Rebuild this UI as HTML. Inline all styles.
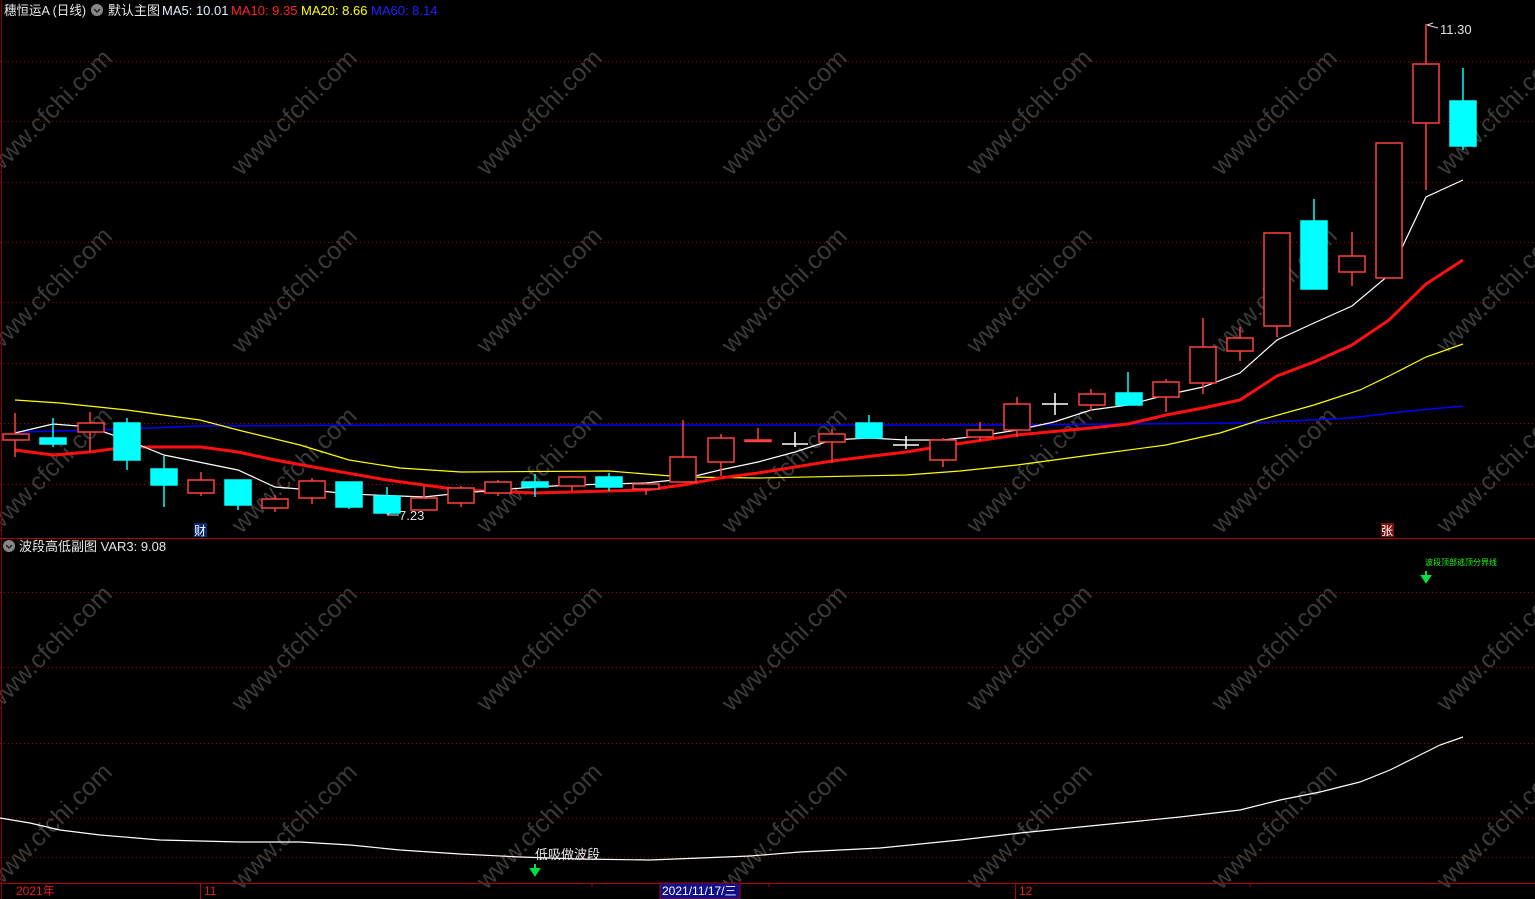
<!DOCTYPE html>
<html><head><meta charset="utf-8"><style>
html,body{margin:0;padding:0;background:#000;width:1535px;height:899px;overflow:hidden}
svg{display:block}
text{font-family:"Liberation Sans","Noto Sans CJK SC",sans-serif}
</style></head><body>
<svg width="1535" height="899" viewBox="0 0 1535 899" xmlns="http://www.w3.org/2000/svg">
<rect width="1535" height="899" fill="#000"/>
<!-- watermark -->
<g fill="#3a3a3a" font-size="25" text-anchor="middle">
<g id="wr">
<text transform="translate(55,118) rotate(-45)">www.cfchi.com</text>
<text transform="translate(300,118) rotate(-45)">www.cfchi.com</text>
<text transform="translate(545,118) rotate(-45)">www.cfchi.com</text>
<text transform="translate(790,118) rotate(-45)">www.cfchi.com</text>
<text transform="translate(1035,118) rotate(-45)">www.cfchi.com</text>
<text transform="translate(1280,118) rotate(-45)">www.cfchi.com</text>
<text transform="translate(1505,118) rotate(-45)">www.cfchi.com</text>
</g>
<use href="#wr" y="178"/><use href="#wr" y="358"/><use href="#wr" y="536"/><use href="#wr" y="714"/>
</g>
<!-- grid -->
<g stroke="#a00000" stroke-width="1" stroke-dasharray="1,3">
<line x1="0" y1="61.5" x2="1535" y2="61.5"/><line x1="0" y1="121.5" x2="1535" y2="121.5"/>
<line x1="0" y1="182.5" x2="1535" y2="182.5"/><line x1="0" y1="242.5" x2="1535" y2="242.5"/>
<line x1="0" y1="302.5" x2="1535" y2="302.5"/><line x1="0" y1="363.5" x2="1535" y2="363.5"/>
<line x1="0" y1="423.5" x2="1535" y2="423.5"/><line x1="0" y1="484.5" x2="1535" y2="484.5"/>
<line x1="0" y1="592.5" x2="1535" y2="592.5"/><line x1="0" y1="667.5" x2="1535" y2="667.5"/>
<line x1="0" y1="743.5" x2="1535" y2="743.5"/><line x1="0" y1="818.5" x2="1535" y2="818.5"/>
<line x1="0" y1="857.5" x2="1535" y2="857.5"/>
</g>
<line x1="0" y1="538.5" x2="1535" y2="538.5" stroke="#b00000"/>
<line x1="0" y1="883.5" x2="1535" y2="883.5" stroke="#b00000"/>
<line x1="1.5" y1="0" x2="1.5" y2="899" stroke="#8a0000"/>
<!-- MA lines -->
<polyline fill="none" stroke="#0000ff" stroke-width="1.5" points="15,432 100,430 200,426 400,425 1000,425 1250,423 1350,418 1400,412 1463,406"/>
<polyline fill="none" stroke="#ffff00" stroke-width="1.2" points="15,400 60,403 127,410 200,420 238,430 300,445 349,460 400,468 461,472 609,471 683,477 758,478 906,475 960,471 1017,465 1091,455 1166,445 1220,433 1260,420 1314,405 1360,390 1389,376 1426,357 1463,344"/>
<polyline fill="none" stroke="#ff1010" stroke-width="3" points="15,450 53,455 90,452 127,447 201,447 238,452 275,460 330,470 387,480 461,490 535,493 646,490 683,485 720,478 758,473 832,461 906,452 943,446 1017,435 1091,428 1128,424 1166,415 1203,408 1240,400 1277,376 1314,362 1352,345 1389,320 1426,284 1463,260"/>
<polyline fill="none" stroke="#ffffff" stroke-width="1.2" points="15,433 53,424 90,427 127,440 164,455 238,470 275,487 312,490 349,494 424,497 461,493 498,490 535,487 572,485 646,483 683,479 720,470 758,462 795,452 832,440 869,438 906,440 943,440 980,436 1017,430 1054,422 1091,410 1128,405 1166,395 1203,387 1240,373 1277,340 1314,323 1352,306 1389,275 1426,197 1463,180"/>
<!-- candles -->
<g stroke="#ff4040" stroke-width="1.5" fill="#000">
<line x1="15" y1="413" x2="15" y2="457"/><rect x="3" y="434" width="26" height="6"/>
<line x1="90" y1="412" x2="90" y2="452"/><rect x="78" y="423" width="26" height="9"/>
<line x1="201" y1="472" x2="201" y2="496"/><rect x="188" y="480" width="26" height="13"/>
<line x1="275" y1="495" x2="275" y2="512"/><rect x="262" y="499" width="26" height="9"/>
<line x1="312" y1="478" x2="312" y2="504"/><rect x="299" y="481" width="26" height="17"/>
<line x1="424" y1="486" x2="424" y2="510"/><rect x="411" y="498" width="26" height="12"/>
<line x1="461" y1="486" x2="461" y2="507"/><rect x="448" y="488" width="26" height="15"/>
<line x1="498" y1="480" x2="498" y2="496"/><rect x="485" y="482" width="26" height="11"/>
<line x1="572" y1="476" x2="572" y2="491"/><rect x="559" y="477" width="26" height="9"/>
<line x1="646" y1="483" x2="646" y2="495"/><rect x="633" y="484" width="26" height="5"/>
<line x1="683" y1="420" x2="683" y2="482"/><rect x="670" y="457" width="26" height="25"/>
<line x1="721" y1="434" x2="721" y2="476"/><rect x="708" y="438" width="26" height="24"/>
<line x1="758" y1="428" x2="758" y2="441"/><rect x="745" y="440" width="26" height="1.5" fill="#ff4040"/>
<line x1="832" y1="429" x2="832" y2="463"/><rect x="819" y="434" width="26" height="8"/>
<line x1="943" y1="438" x2="943" y2="467"/><rect x="930" y="440" width="26" height="20"/>
<line x1="980" y1="422" x2="980" y2="441"/><rect x="967" y="430" width="26" height="7"/>
<line x1="1017" y1="397" x2="1017" y2="437"/><rect x="1004" y="404" width="26" height="26"/>
<line x1="1091" y1="389" x2="1091" y2="411"/><rect x="1079" y="394" width="26" height="11"/>
<line x1="1166" y1="379" x2="1166" y2="412"/><rect x="1153" y="382" width="26" height="15"/>
<line x1="1203" y1="318" x2="1203" y2="394"/><rect x="1190" y="347" width="26" height="36"/>
<line x1="1240" y1="327" x2="1240" y2="361"/><rect x="1227" y="338" width="26" height="13"/>
<line x1="1277" y1="233" x2="1277" y2="337"/><rect x="1264" y="233" width="26" height="93"/>
<line x1="1352" y1="232" x2="1352" y2="286"/><rect x="1339" y="256" width="26" height="16"/>
<line x1="1389" y1="143" x2="1389" y2="278"/><rect x="1376" y="143" width="26" height="135"/>
<line x1="1426" y1="24" x2="1426" y2="190"/><rect x="1413" y="64" width="26" height="59"/>
</g>
<g stroke="#00ffff" stroke-width="1.5" fill="#00ffff">
<line x1="53" y1="418" x2="53" y2="447"/><rect x="40" y="438" width="26" height="6"/>
<line x1="127" y1="418" x2="127" y2="470"/><rect x="114" y="423" width="26" height="37"/>
<line x1="164" y1="456" x2="164" y2="507"/><rect x="151" y="469" width="26" height="16"/>
<line x1="238" y1="480" x2="238" y2="510"/><rect x="225" y="480" width="26" height="25"/>
<line x1="349" y1="482" x2="349" y2="509"/><rect x="336" y="482" width="26" height="25"/>
<line x1="387" y1="487" x2="387" y2="514"/><rect x="374" y="496" width="26" height="17"/>
<line x1="535" y1="474" x2="535" y2="497"/><rect x="522" y="482" width="26" height="5"/>
<line x1="609" y1="473" x2="609" y2="491"/><rect x="596" y="477" width="26" height="10"/>
<line x1="869" y1="415" x2="869" y2="439"/><rect x="856" y="423" width="26" height="15"/>
<line x1="1128" y1="372" x2="1128" y2="405"/><rect x="1116" y="393" width="26" height="12"/>
<line x1="1314" y1="199" x2="1314" y2="289"/><rect x="1301" y="221" width="26" height="68"/>
<line x1="1463" y1="68" x2="1463" y2="150"/><rect x="1450" y="101" width="26" height="45"/>
</g>
<g stroke="#fff" stroke-width="1.5">
<line x1="782" y1="444" x2="808" y2="444"/><line x1="795" y1="432" x2="795" y2="447"/>
<line x1="893" y1="445" x2="919" y2="445"/><line x1="906" y1="436" x2="906" y2="449"/>
<line x1="1042" y1="404" x2="1068" y2="404"/><line x1="1055" y1="393" x2="1055" y2="415"/>
</g>
<!-- labels -->
<text x="1440" y="34" fill="#e0e0e0" font-size="13">11.30</text>
<path d="M1427,25 L1433,23 M1427,25 L1438,28" stroke="#ddd" fill="none"/>
<text x="399" y="520" fill="#e0e0e0" font-size="13">7.23</text>
<path d="M387,515 L399,515 M387,515 L391,512" stroke="#ddd" fill="none"/>
<rect x="194" y="523" width="13" height="14" fill="#0a2a70"/>
<text x="194" y="535" fill="#fff" font-size="12">财</text>
<rect x="1381" y="523" width="13" height="14" fill="#801010"/>
<text x="1381" y="535" fill="#fff" font-size="12">张</text>
<!-- header -->
<text x="4" y="15" font-size="13" fill="#e8e8e8" textLength="82" lengthAdjust="spacingAndGlyphs">穗恒运A (日线)</text>
<circle cx="97" cy="10" r="6" fill="#888"/><path d="M94,9 L97,12 L100,9" stroke="#222" stroke-width="1.5" fill="none"/>
<text x="108" y="15" font-size="13" fill="#e8e8e8">默认主图</text>
<text x="162" y="15" font-size="13" fill="#dfefff">MA5: 10.01</text>
<text x="231" y="15" font-size="13" fill="#ff2020">MA10: 9.35</text>
<text x="301" y="15" font-size="13" fill="#ffff00">MA20: 8.66</text>
<text x="371" y="15" font-size="13" fill="#2020ff">MA60: 8.14</text>
<circle cx="9" cy="546" r="6" fill="#888"/><path d="M6,545 L9,548 L12,545" stroke="#222" stroke-width="1.5" fill="none"/>
<text x="19" y="551" font-size="13" fill="#e8e8e8">波段高低副图  VAR3: 9.08</text>
<!-- lower line -->
<polyline fill="none" stroke="#fff" stroke-width="1.2" points="0,818 30,823 60,830 100,835 160,840 240,842 300,842 350,845 400,850 460,854 520,857 580,859 650,860 700,858 750,856 800,852 880,848 960,840 1020,833 1100,825 1180,817 1240,810 1280,800 1320,792 1360,782 1390,770 1420,755 1440,745 1463,737"/>
<text x="535" y="859" fill="#e8e8e8" font-size="13">低吸做波段</text>
<path d="M535,864 V872 M531,869 L535,875 L539,869 Z" stroke="#00e040" fill="#00e040" stroke-width="2"/>
<text x="1425" y="565" fill="#20ff20" font-size="8">波段顶部逃顶分界线</text>
<path d="M1426,571 V578 M1422,576 L1426,582 L1430,576 Z" stroke="#00e040" fill="#00e040" stroke-width="2"/>
<!-- axis -->
<text x="16" y="895" fill="#e02020" font-size="12">2021年</text>
<line x1="200.5" y1="883" x2="200.5" y2="899" stroke="#b00000"/><text x="204" y="895" fill="#e02020" font-size="12">11</text>
<line x1="1015.5" y1="883" x2="1015.5" y2="899" stroke="#b00000"/><text x="1019" y="895" fill="#e02020" font-size="12">12</text>
<line x1="592" y1="883" x2="592" y2="887" stroke="#b00000"/><line x1="769" y1="883" x2="769" y2="887" stroke="#b00000"/><line x1="1250" y1="883" x2="1250" y2="887" stroke="#b00000"/>
<rect x="660" y="883" width="80" height="16" fill="#10108a" stroke="#b00000"/>
<text x="662" y="895" fill="#fff" font-size="12">2021/11/17/三</text>
</svg>
</body></html>
